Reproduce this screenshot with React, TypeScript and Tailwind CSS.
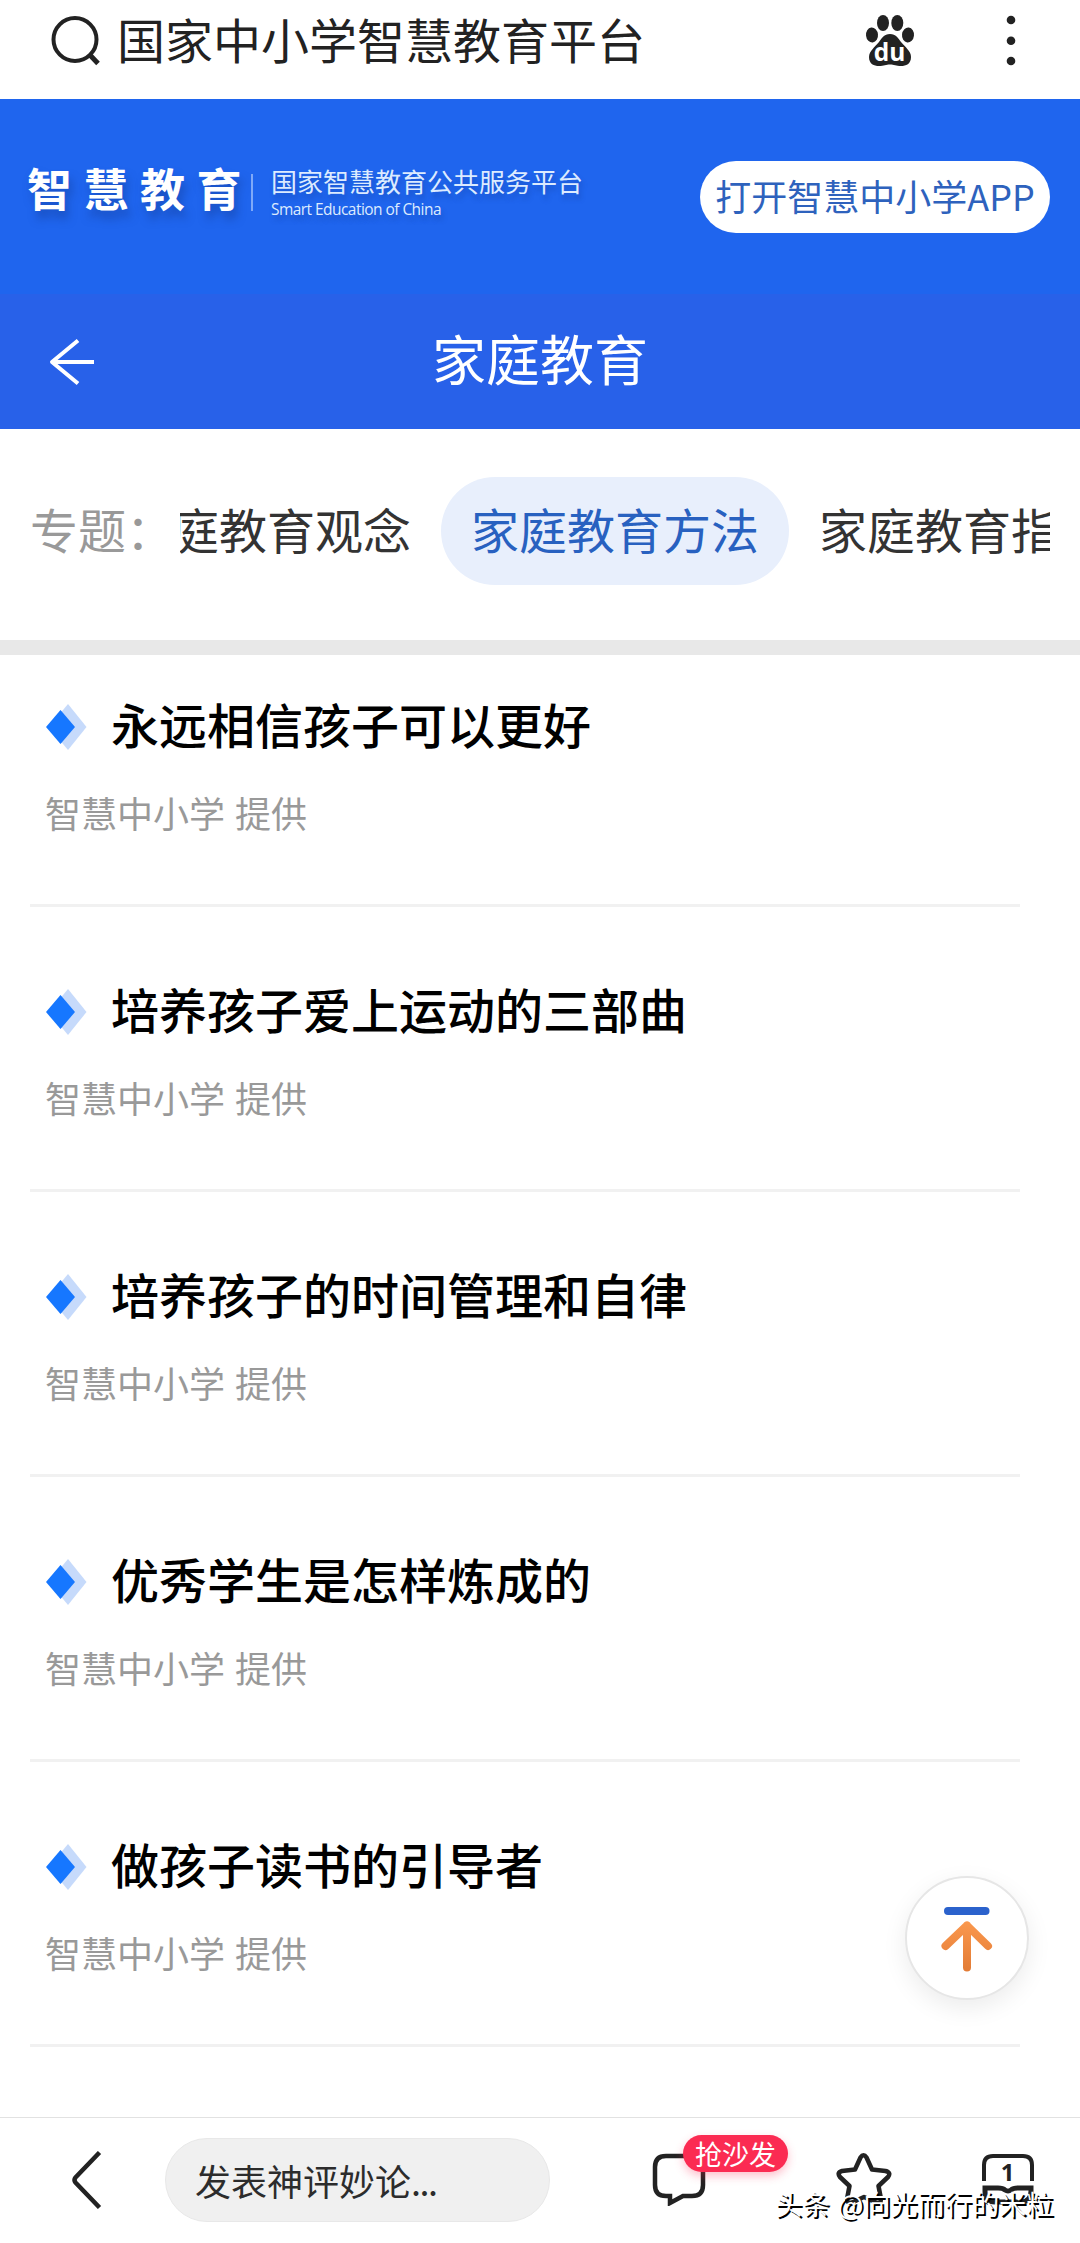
const tabs = [
  { name: '家庭教育观念', active: false },
  { name: '家庭教育方法', active: true },
  { name: '家庭教育指导', active: false },
]

const courses = [
  '永远相信孩子可以更好',
  '培养孩子爱上运动的三部曲',
  '培养孩子的时间管理和自律',
  '优秀学生是怎样炼成的',
  '做孩子读书的引导者',
]

function SearchBar() {
  return (
    <header className="flex h-[99px] items-start bg-white pl-[50px] text-[#222]">
      <svg className="mt-[15px] h-[52px] w-[52px] shrink-0" viewBox="0 0 52 52" fill="none" stroke="currentColor" strokeWidth={4}>
        <circle cx="25" cy="24.5" r="21.5" />
        <path d="M39.500 39.500L48 48.500" strokeWidth={5} />
      </svg>
      <h1 className="ml-[15px] mt-[2px] text-[48px] leading-[72px]">国家中小学智慧教育平台</h1>
      <svg className="ml-[220px] mt-[14px] h-[54px] w-[50px] shrink-0" viewBox="0 0 50 54" fill="currentColor">
        <ellipse cx="7" cy="21" rx="6" ry="7.5" transform="rotate(-6 7 21)" />
        <ellipse cx="18" cy="9" rx="6" ry="8" />
        <ellipse cx="32.3" cy="9" rx="6" ry="8" />
        <ellipse cx="43" cy="21" rx="6" ry="7.5" transform="rotate(6 43 21)" />
        <path d="M25 20C31 20 33 24 36 28C40 33 46 37 46 43C46 50 41 52 36 52C31 52 29 50.500 25 50.500C21 50.500 19 52 14 52C9 52 4 50 4 43C4 37 10 33 14 28C17 24 19 20 25 20Z" />
        <text x="24.500" y="47" textAnchor="middle" fontSize="24.500" fontWeight="700" fill="white" fontFamily="Open Sans, sans-serif">du</text>
      </svg>
      <svg className="ml-[90px] mt-[14px] h-[54px] w-[12px] shrink-0" viewBox="0 0 12 54" fill="currentColor">
        <circle cx="6" cy="6" r="4.300" />
        <circle cx="6" cy="26.700" r="4.300" />
        <circle cx="6" cy="47" r="4.300" />
      </svg>
    </header>
  )
}

function Banner() {
  return (
    <div className="flex h-[195px] items-start justify-between bg-[#1f65ee] pl-[27px] pr-[30px] text-white">
      <div className="flex items-start">
        <div className="mt-[54px] h-[70px] w-[224px] whitespace-nowrap text-[45px] font-bold leading-[70px] tracking-[11.5px] [text-shadow:3px_8px_8px_rgba(20,60,150,0.5)]">
          智慧教育
        </div>
        <div className="mt-[75px] h-[37px] w-[2px] bg-[#7fa9f8]" />
        <div className="ml-[18px] mt-[62px] text-[#dcebff] [text-shadow:2px_5px_5px_rgba(20,60,150,0.4)]">
          <div className="text-[26px] leading-[39px]">国家智慧教育公共服务平台</div>
          <div className="-mt-[1px] text-[15.5px] leading-[20px] tracking-[-0.55px] [font-family:'Open_Sans',sans-serif]">Smart Education of China</div>
        </div>
      </div>
      <button className="mt-[62px] h-[72px] w-[350px] whitespace-nowrap rounded-full bg-white pb-[4px] text-[36px] leading-[68px] text-[#2e62bd]">
        打开智慧中小学APP
      </button>
    </div>
  )
}

function TitleBar() {
  return (
    <div className="grid h-[135px] grid-cols-[120px_1fr_120px] items-center bg-[#2861e9] text-white">
      <svg className="ml-[47px] h-[48px] w-[48px]" viewBox="0 0 48 48" fill="none" stroke="currentColor" strokeWidth={4}>
        <path d="M31 2.500L5 24L31 45.500M5 24H47" strokeLinejoin="round" />
      </svg>
      <h2 className="-mt-[8px] text-center text-[54px] leading-[80px]">家庭教育</h2>
    </div>
  )
}

function TopicTabs() {
  return (
    <div className="flex h-[211px] items-start bg-white pl-[30px] pr-[30px] pt-[48px] text-[48px] leading-[102px]">
      <span className="w-[150px] shrink-0 whitespace-nowrap text-[#999]">专题：</span>
      <div className="flex min-w-0 flex-1 justify-start overflow-hidden">
        <div className="-ml-[87px] flex shrink-0">
          {tabs.map((tab) => (
            <button
              key={tab.name}
              className={
                tab.active
                  ? 'h-[108px] shrink-0 rounded-full bg-[#e8effc] px-[30px] pb-[6px] leading-[102px] text-[#2861c0]'
                  : 'h-[108px] shrink-0 px-[30px] pb-[6px] leading-[102px] text-[#333]'
              }
            >
              {tab.name}
            </button>
          ))}
        </div>
      </div>
    </div>
  )
}

function CourseItem({ title }: { title: string }) {
  return (
    <li className="ml-[30px] mr-[60px] h-[285px] border-b-[3px] border-[#f1f1f1] pl-[15px] pt-[69px]">
      <div className="flex h-[72px] items-center">
        <svg className="h-[48px] w-[44px] shrink-0" viewBox="0 0 44 48">
          <path d="M23 1L41.500 24L23 47L4 24Z" fill="#c6dafb" />
          <path d="M15.500 7L30 24L15.500 41L1 24Z" fill="#1677ff" />
        </svg>
        <h3 className="-mt-[8px] ml-[22px] text-[48px] font-medium leading-[72px] text-black">{title}</h3>
      </div>
      <p className="mt-[22px] text-[36px] leading-[54px] text-[#999] [word-spacing:2px]">智慧中小学 提供</p>
    </li>
  )
}

function BackToTop() {
  return (
    <button className="absolute left-[905px] top-[1876px] h-[124px] w-[124px] rounded-full border-2 border-[#e6e6e6] bg-white shadow-[0_8px_24px_rgba(0,0,0,0.08)]">
      <svg className="h-[120px] w-[120px]" viewBox="0 0 120 120" fill="none" strokeWidth={8} strokeLinecap="round" strokeLinejoin="round">
        <defs>
          <linearGradient id="arrow" x1="0" y1="42" x2="0" y2="94" gradientUnits="userSpaceOnUse">
            <stop stopColor="#fb994f" />
            <stop offset="1" stopColor="#e27b35" />
          </linearGradient>
        </defs>
        <path d="M41 33H78.500" stroke="#2b62cc" />
        <path d="M38.500 68L60 47.500L81 68M60 47.500V89.500" stroke="url(#arrow)" />
      </svg>
    </button>
  )
}

function BottomBar() {
  return (
    <footer className="relative flex h-[126px] items-start border-t border-[#e2e2e2] bg-white text-[#222]">
      <svg className="ml-[70px] mt-[33px] h-[58px] w-[34px] shrink-0" viewBox="0 0 34 58" fill="none" stroke="currentColor" strokeWidth={4.5}>
        <path d="M29.500 1.500L5.500 26.500Q3.500 29 5.500 31.500L29.500 56.500" />
      </svg>
      <div className="ml-[61px] mt-[20px] h-[84px] w-[385px] rounded-full border border-[#e8e8e8] bg-[#f0f0f0] pl-[29px] text-[36px] leading-[82px] text-[#2c2c2c]">
        发表神评妙论<span className="tracking-[-1.5px]">...</span>
      </div>
      <div className="relative ml-[102px] mt-[34px] h-[54px] w-[54px]">
        <svg className="h-[54px] w-[54px]" viewBox="0 0 54 54" fill="none" stroke="currentColor" strokeWidth={4.5}>
          <path d="M14 4H40Q51 4 51 15V33Q51 44 40 44H31L18 51V44H14Q3 44 3 33V15Q3 4 14 4Z" />
        </svg>
        <span className="absolute -top-[17px] left-[31px] h-[37px] w-[105px] rounded-full bg-[#fb2b52] text-center text-[27px] leading-[37px] text-white shadow-[0_4px_10px_rgba(251,43,82,0.3)]">
          抢沙发
        </span>
      </div>
      <svg className="ml-[130px] mt-[34px] h-[56px] w-[56px]" viewBox="0 0 56 56" fill="none" stroke="currentColor" strokeWidth={4.5} strokeLinejoin="round">
        <path d="M24.500 5.500Q27.500 1 30.500 5.500L36 17.500L49.500 19Q55.500 20.500 52 25L42.500 34L45 47Q45 52 40 50.500L28 45L16 50.500Q11 52 11 47L13.500 34L4 25Q0.500 20.500 6 19L19 17.500Z" />
      </svg>
      <svg className="ml-[89px] mt-[35px] h-[56px] w-[54px]" viewBox="0 0 54 56" fill="none" stroke="currentColor" strokeWidth={4}>
        <path d="M3 28V12Q3 3 12 3H42Q51 3 51 12V28" />
        <path d="M4 35H17Q22 35 24 37Q27 39 30 37Q32 35 37 35H50V38Q50 49 40 49H14Q4 49 4 38Z" strokeWidth={5} />
        <text x="26.500" y="28" textAnchor="middle" fontSize="24" fontWeight="700" fill="currentColor" stroke="none" fontFamily="Open Sans, sans-serif">1</text>
      </svg>
      <div className="absolute left-[775px] top-[65px] whitespace-nowrap text-[27.2px] leading-[40px] text-white [text-shadow:2px_2px_0_#000] [word-spacing:2px]">
        头条 @向光而行的米粒
      </div>
    </footer>
  )
}

export default function App() {
  return (
    <main className="relative flex h-[2243px] w-[1080px] flex-col overflow-hidden bg-white [font-family:'Noto_Sans_CJK_SC',sans-serif]">
      <SearchBar />
      <Banner />
      <TitleBar />
      <TopicTabs />
      <div className="h-[15px] shrink-0 bg-[#e8e8e8]" />
      <ul className="-mt-[33px] h-[1495px] shrink-0">
        {courses.map((title) => (
          <CourseItem key={title} title={title} />
        ))}
      </ul>
      <BottomBar />
      <BackToTop />
    </main>
  )
}
